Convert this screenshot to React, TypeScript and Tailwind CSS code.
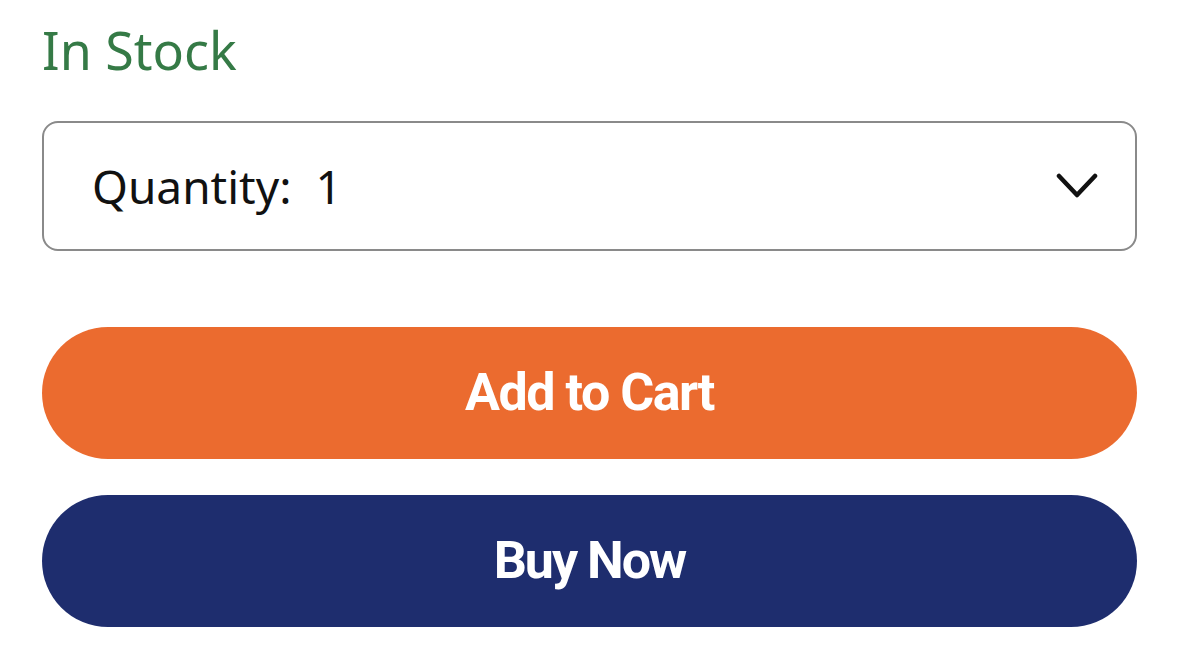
export default function App() {
  return (
    <div className="min-h-[651px] w-[1179px] bg-white px-[42px] pt-[24px]">
      <div className="font-['Noto_Sans',sans-serif] text-[52px] leading-[52px] text-[#357a46]">In Stock</div>

      <div className="mt-[45px] flex h-[130px] items-center justify-between rounded-[16px] border-2 border-[#8a8a8a] pl-[48px] pr-[37px]">
        <span className="font-['Noto_Sans',sans-serif] text-[46px] text-[#111]">Quantity:&nbsp; 1</span>
        <svg width="42" height="28" viewBox="0 0 42 28" fill="none" className="text-[#111]">
          <polyline points="3,4 21,23 39,4" stroke="currentColor" strokeWidth="4.5" strokeLinecap="round" strokeLinejoin="round" />
        </svg>
      </div>

      <button className="mt-[76px] flex h-[132px] w-full items-center justify-center rounded-full bg-[#eb6b2f] font-['Roboto',sans-serif] text-[52px] font-bold tracking-[-1.5px] text-white">
        Add to Cart
      </button>

      <button className="mt-[36px] flex h-[132px] w-full items-center justify-center rounded-full bg-[#1e2d6e] font-['Roboto',sans-serif] text-[52px] font-bold tracking-[-2px] text-white">
        Buy Now
      </button>
    </div>
  );
}
